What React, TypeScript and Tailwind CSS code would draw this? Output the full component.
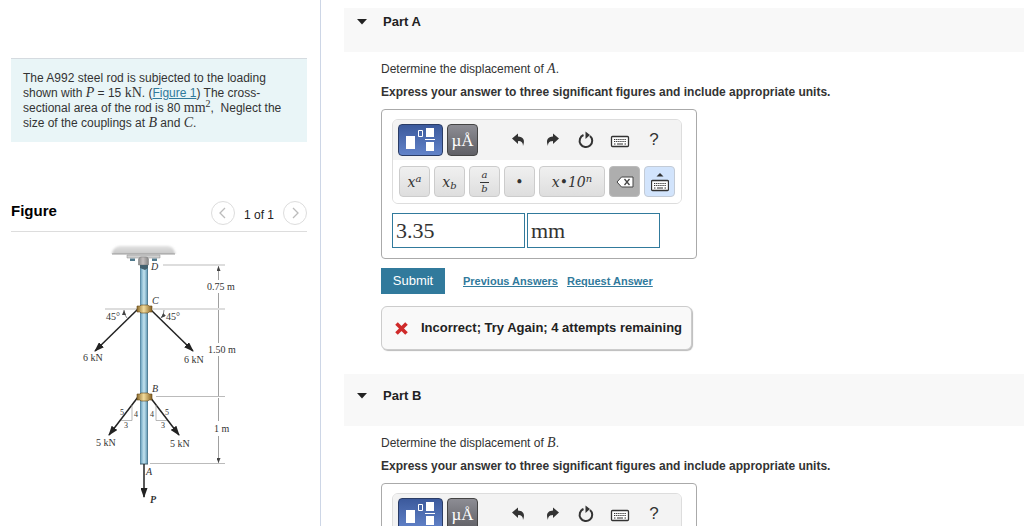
import type { ReactNode } from 'react';

interface Part {
    id: string;
    title: string;
    point: string;
    value: string;
    unit: string;
    headerClass: string;
    feedback?: string;
}

const parts: Part[] = [
    {
        id: 'part-a',
        title: 'Part A',
        point: 'A',
        value: '3.35',
        unit: 'mm',
        headerClass: 'pt-1 pb-5',
        feedback: 'Incorrect; Try Again; 4 attempts remaining',
    },
    { id: 'part-b', title: 'Part B', point: 'B', value: '', unit: '', headerClass: 'pt-3 pb-5' },
];

export default function App() {
    return (
        <div className="flex h-screen overflow-hidden bg-white font-['Liberation_Sans',Arial,sans-serif] text-[#333]">
            <aside className="w-[321px] shrink-0 border-r border-[#cdd6e6] pl-[11px] pr-[13px]">
                <ProblemStatement />
                <FigurePanel />
            </aside>
            <main className="min-w-0 flex-1 pl-[23px] pt-2">
                {parts.map((part) => (
                    <PartSection key={part.id} part={part} />
                ))}
            </main>
        </div>
    );
}

function MathText({ children, italic = true }: { children: ReactNode; italic?: boolean }) {
    return (
        <span
            className={`font-['Liberation_Serif',serif] text-sm leading-none ${italic ? 'italic' : ''}`}
        >
            {children}
        </span>
    );
}

function ProblemStatement() {
    return (
        <div className="mt-[58px] h-[84px] border-t border-[#d5dbe0] bg-[#e9f5f7] px-3 pt-3 text-xs leading-[15px] whitespace-nowrap">
            <p>The A992 steel rod is subjected to the loading</p>
            <p>
                shown with <MathText>P</MathText> = 15 <MathText italic={false}>kN</MathText>. (
                <a href="#figure" className="text-[#317a9c] underline">
                    Figure 1
                </a>
                ) The cross-
            </p>
            <p>
                sectional area of the rod is 80{' '}
                <MathText italic={false}>
                    mm<sup className="text-[10px] leading-none">2</sup>
                </MathText>
                ,&nbsp; Neglect the
            </p>
            <p>
                size of the couplings at <MathText>B</MathText> and <MathText>C</MathText>.
            </p>
        </div>
    );
}

function FigurePanel() {
    return (
        <section id="figure">
            <div className="mt-[52px] flex h-[38px] items-center border-b border-[#ddd]">
                <h2 className="mb-1 flex-1 text-[15px] leading-5 font-bold text-black">Figure</h2>
                <PagerButton label="Previous figure" path="M9 3 4 8l5 5" />
                <span className="px-[9px] pt-1 text-xs text-[#222]">1 of 1</span>
                <PagerButton label="Next figure" path="m5 3 5 5-5 5" />
            </div>
            <RodDiagram />
        </section>
    );
}

function PagerButton({ label, path }: { label: string; path: string }) {
    return (
        <button
            type="button"
            aria-label={label}
            className="flex size-6 items-center justify-center rounded-full border border-[#ddd]"
        >
            <svg width="14" height="16" viewBox="0 0 14 16" fill="none" stroke="#bbb" strokeWidth="1.3">
                <path d={path} />
            </svg>
        </button>
    );
}

function RodDiagram() {
    return (
        <svg
            width="160"
            height="266"
            viewBox="80 240 160 266"
            className="mt-2 ml-[69px] font-['Liberation_Serif',serif]"
            fontSize="10"
            fill="#333"
            role="img"
            aria-label="Steel rod hung from D with loads at C, B and A"
        >
            <defs>
                <linearGradient id="rod">
                    <stop offset="0" stopColor="#4f7f99" />
                    <stop offset="0.2" stopColor="#86b7cf" />
                    <stop offset="0.5" stopColor="#c3e2ee" />
                    <stop offset="0.8" stopColor="#7fb0c8" />
                    <stop offset="1" stopColor="#3f6a80" />
                </linearGradient>
                <linearGradient id="brass">
                    <stop offset="0" stopColor="#8c6a2c" />
                    <stop offset="0.45" stopColor="#f2dc9c" />
                    <stop offset="1" stopColor="#86601f" />
                </linearGradient>
                <linearGradient id="ceiling" x1="0" y1="0" x2="0" y2="1">
                    <stop offset="0" stopColor="#e2e2e2" />
                    <stop offset="1" stopColor="#bdbdbd" />
                </linearGradient>
                <linearGradient id="bracket">
                    <stop offset="0" stopColor="#8d8d8d" />
                    <stop offset="0.45" stopColor="#c4bfbf" />
                    <stop offset="1" stopColor="#858585" />
                </linearGradient>
                <filter id="soft" x="-10%" y="-30%" width="120%" height="160%">
                    <feGaussianBlur stdDeviation="1.2" />
                </filter>
                <clipPath id="above-ceiling">
                    <path d="M105 238h80v16h-80Z" />
                </clipPath>
                <marker
                    id="load"
                    viewBox="0 0 10 7"
                    refX="9"
                    refY="3.5"
                    markerWidth="10"
                    markerHeight="7"
                    markerUnits="userSpaceOnUse"
                    orient="auto"
                >
                    <path d="M0 0 10 3.500 0 7Z" fill="#222" />
                </marker>
                <marker
                    id="dim"
                    viewBox="0 0 5 4"
                    refX="5"
                    refY="2"
                    markerWidth="5"
                    markerHeight="4"
                    markerUnits="userSpaceOnUse"
                    orient="auto-start-reverse"
                >
                    <path d="M0 0 5 2 0 4Z" fill="#444" />
                </marker>
            </defs>

            {/* ceiling and bracket */}
            <g clipPath="url(#above-ceiling)">
                <path d="M112 257q-1-9 7-11h49q8 1 7 11Z" fill="url(#ceiling)" filter="url(#soft)" />
            </g>
            <path d="M112 254h63" stroke="#999" />
            <path d="M127 255h33v3h-33Z" fill="#d0d0d0" stroke="#888" strokeWidth="0.5" />
            <path d="M130 258.500h5v2.500h-5ZM152 258.500h5v2.500h-5Z" fill="#51798c" />
            <path d="M138.500 265v-6q1-2 2.500-2h5q2 0 2.500 2v6Z" fill="url(#bracket)" stroke="#777" strokeWidth="0.5" />

            {/* rod */}
            <path d="M140 265h8v199h-8Z" fill="url(#rod)" />
            <path d="M140 265h8v3l-3 2-5-2Z" fill="#42606e" />
            <path d="M140 464h8" stroke="#41606f" />

            {/* dimension lines */}
            <g stroke="#aaa" strokeWidth="0.8">
                <path d="M163 265h62M105 309h32M153 309h72M156 396.500h69M150 463.500h75" />
            </g>
            <g stroke="#888" strokeWidth="0.8">
                <path d="M218.500 266v14M218.500 310v33M218.500 398v23" markerStart="url(#dim)" />
                <path d="M218.500 293v15M218.500 356v40M218.500 436v27" markerEnd="url(#dim)" />
            </g>

            {/* loads */}
            <g stroke="#222" strokeWidth="1.5" fill="none">
                <path d="M138 309 95 351" markerEnd="url(#load)" />
                <path d="M150 309 193 351" markerEnd="url(#load)" />
                <path d="M138 397 109 435" markerEnd="url(#load)" />
                <path d="M150 397 179 435" markerEnd="url(#load)" />
                <path d="M144 464v33" markerEnd="url(#load)" />
            </g>
            <g stroke="#555" strokeWidth="0.7" fill="none">
                <path d="M124 310q0 5 3 8M164 310q0 5-3 8" markerStart="url(#dim)" markerEnd="url(#dim)" />
                <path d="M132 405v15.500h-11M156 405v15.500h11" stroke="#999" />
            </g>

            {/* couplings */}
            <g fill="url(#brass)" stroke="#65491b" strokeWidth="0.6">
                <path d="M137 306h3l1-1h7l1 1h3v6h-3l-1 1h-7l-1-1h-3Z" />
                <path d="M137 394h3l1-1h7l1 1h3v6h-3l-1 1h-7l-1-1h-3Z" />
            </g>

            <g fontStyle="italic">
                <text x="151" y="270">D</text>
                <text x="152" y="304">C</text>
                <text x="152" y="392">B</text>
                <text x="146" y="475">A</text>
                <text x="150" y="503" fontWeight="bold">P</text>
            </g>
            <text x="207" y="290">0.75 m</text>
            <text x="208" y="353">1.50 m</text>
            <text x="214" y="432">1 m</text>
            <text x="106" y="320">45°</text>
            <text x="166" y="320">45°</text>
            <text x="83" y="361">6 kN</text>
            <text x="184" y="363">6 kN</text>
            <text x="96" y="446">5 kN</text>
            <text x="170" y="447">5 kN</text>
            <g fontSize="8">
                <text x="120" y="415">5</text>
                <text x="134" y="417">4</text>
                <text x="124" y="428">3</text>
                <text x="150" y="417">4</text>
                <text x="165" y="415">5</text>
                <text x="161" y="428">3</text>
            </g>
        </svg>
    );
}

function PartSection({ part }: { part: Part }) {
    return (
        <section className="mb-6">
            <header className={`bg-[#f8f8f8] pl-3 ${part.headerClass}`}>
                <button type="button" className="flex items-center text-[13px] leading-5 font-bold text-[#222]">
                    <svg width="12" height="6" viewBox="0 0 12 6" className="mr-[15px]" fill="#222">
                        <path d="M1 0h10L6 5.500Z" />
                    </svg>
                    {part.title}
                </button>
            </header>
            <div className="pt-2 pl-[37px]">
                <p className="text-xs leading-[18px]">
                    Determine the displacement of <MathText>{part.point}</MathText>.
                </p>
                <p className="mt-[5px] text-xs leading-[18px] font-bold">
                    Express your answer to three significant figures and include appropriate units.
                </p>
                <AnswerBox part={part} />
                <div className="mt-[9px] flex items-center text-[11px] font-bold text-[#317a9c]">
                    <button type="button" className="mr-[18px] h-[26px] w-16 bg-[#317a9c] text-[13px] font-normal text-white">
                        Submit
                    </button>
                    <a href="#previous" className="mr-[9px] underline">
                        Previous Answers
                    </a>
                    <a href="#request" className="underline">
                        Request Answer
                    </a>
                </div>
                {part.feedback && (
                    <div
                        role="status"
                        className="mt-3 flex h-11 w-[311px] items-center rounded-md border border-[#ccc] bg-[#f9f9f9] pl-[13px] text-[13px] font-bold whitespace-nowrap text-[#222] shadow-[1px_1px_1px_#bbb]"
                    >
                        <svg width="13" height="13" viewBox="0 0 13 13" className="mr-[13px]" stroke="#cf2a2a" strokeWidth="3.6">
                            <path d="m1.500 1.500 10 10M11.500 1.500l-10 10" />
                        </svg>
                        {part.feedback}
                    </div>
                )}
            </div>
        </section>
    );
}

function AnswerBox({ part }: { part: Part }) {
    return (
        <div className="mt-2 w-[316px] rounded border border-[#aaa] p-[10px] pt-[9px]">
            <EquationToolbar />
            <div className="mt-[9px] flex gap-[2px] font-['Liberation_Serif',serif] text-[22px] text-[#333]">
                <input
                    aria-label={`${part.title} value`}
                    defaultValue={part.value}
                    className="h-[35px] w-[133px] border border-[#317a9c] px-[3px]"
                />
                <input
                    aria-label={`${part.title} units`}
                    defaultValue={part.unit}
                    className="h-[35px] w-[133px] border border-[#317a9c] px-[3px]"
                />
            </div>
        </div>
    );
}

function EquationToolbar() {
    return (
        <div className="w-[290px] overflow-hidden rounded-md border border-[#ddd]">
            <div className="flex h-10 items-center gap-1 bg-[#f3f3f3] pl-[5px]">
                <button
                    type="button"
                    aria-label="Templates"
                    className="flex h-8 w-[45px] items-center justify-center rounded border border-[#2a3c66] bg-linear-to-b from-[#3c5a9c] to-[#6283c9]"
                >
                    <svg width="30" height="26" viewBox="0 0 30 26" fill="#fff">
                        <path d="M0 9h9v13H0ZM20 1h8v9h-8ZM20 15h8v9h-8ZM19 12h10v1H19Z" />
                        <path d="M12.500 3.500h4v6h-4Z" fill="none" stroke="#fff" />
                    </svg>
                </button>
                <button
                    type="button"
                    aria-label="Units"
                    className="h-8 w-[31px] rounded border border-[#444] bg-linear-to-b from-[#8d8d94] to-[#606066] font-['Liberation_Serif',serif] text-[17px] leading-none text-white"
                >
                    µÅ
                </button>
                <div className="ml-[19px] flex text-[#333]">
                    <IconButton label="Undo">
                        <path d="M2 6.500 8 1.500v3c5 .3 7.500 3.300 5 9.500 0-3.500-1.500-4.800-5-5V12Z" fill="currentColor" />
                    </IconButton>
                    <IconButton label="Redo">
                        <path d="M15 6.500 9 1.500v3c-5 .3-7.500 3.300-5 9.500 0-3.500 1.500-4.800 5-5V12Z" fill="currentColor" />
                    </IconButton>
                    <IconButton label="Reset">
                        <path d="M12 4A6.300 6.300 0 1 1 5.500 3" fill="none" stroke="currentColor" strokeWidth="2" />
                        <path d="m7.500-.5 4.500 3.500-4.500 4Z" fill="currentColor" />
                    </IconButton>
                    <IconButton label="Keyboard shortcuts">
                        <g transform="translate(-1 4)">
                            <KeyboardShape />
                        </g>
                    </IconButton>
                    <button type="button" aria-label="Help" className="w-[34px] text-[17px] leading-5">
                        ?
                    </button>
                </div>
            </div>
            <div className="flex h-[43px] items-center gap-1 bg-white pl-[6px] font-['DejaVu_Serif',serif] text-sm text-[#333] italic">
                <KeyButton label="Superscript">
                    x<sup className="text-[10px]">a</sup>
                </KeyButton>
                <KeyButton label="Subscript">
                    x<sub className="text-[10px]">b</sub>
                </KeyButton>
                <KeyButton label="Fraction">
                    <span className="flex flex-col items-center text-[10px] leading-[10px]">
                        <span className="border-b border-[#333] px-[2px] pb-[2px]">a</span>
                        <span className="pt-px">b</span>
                    </span>
                </KeyButton>
                <KeyButton label="Multiply">•</KeyButton>
                <KeyButton label="Scientific notation" wide>
                    x•10<sup className="text-[10px]">n</sup>
                </KeyButton>
                <button
                    type="button"
                    aria-label="Delete"
                    className="flex size-[31px] items-center justify-center rounded border border-[#bbb] bg-[#aeaeae]"
                >
                    <svg width="18" height="12" viewBox="0 0 18 12" fill="#fff" stroke="#444">
                        <path d="M5.500 1h11.500v10H5.500L1 6Z" />
                        <path d="m8.500 3 5 6m0-6-5 6" strokeWidth="1.300" />
                    </svg>
                </button>
                <button
                    type="button"
                    aria-label="Toggle keyboard"
                    className="flex size-[31px] items-center justify-center rounded border border-[#c3cbd6] bg-[#d2e4fc] text-[#333]"
                >
                    <svg width="18" height="20" viewBox="0 0 18 20">
                        <path d="M5.500 4.500 9 1l3.500 3.500Z" fill="currentColor" />
                        <g transform="translate(0 8)">
                            <KeyboardShape />
                        </g>
                    </svg>
                </button>
            </div>
        </div>
    );
}

function IconButton({ label, children }: { label: string; children: ReactNode }) {
    return (
        <button type="button" aria-label={label} className="flex w-[34px] items-center justify-center">
            <svg width="16" height="16" viewBox="0 0 16 16" className="overflow-visible">
                {children}
            </svg>
        </button>
    );
}

function KeyButton({ label, wide, children }: { label: string; wide?: boolean; children: ReactNode }) {
    return (
        <button
            type="button"
            aria-label={label}
            className={`h-[31px] rounded border border-[#ccc] bg-linear-to-b from-[#f0f0f0] to-[#dedede] leading-none italic ${
                wide ? 'w-[66px]' : 'w-[31px]'
            }`}
        >
            {children}
        </button>
    );
}

function KeyboardShape() {
    return (
        <g fill="none" stroke="currentColor">
            <rect x="0.5" y="0.5" width="17" height="10" rx="1" fill="#fff" strokeWidth="1.300" />
            <path d="M3 3.500h12M3 5.500h12" strokeWidth="1.200" strokeDasharray="1.300 0.800" />
            <path d="M3 8h1.500M6 8h6M13.500 8H15" strokeWidth="1.200" />
        </g>
    );
}
